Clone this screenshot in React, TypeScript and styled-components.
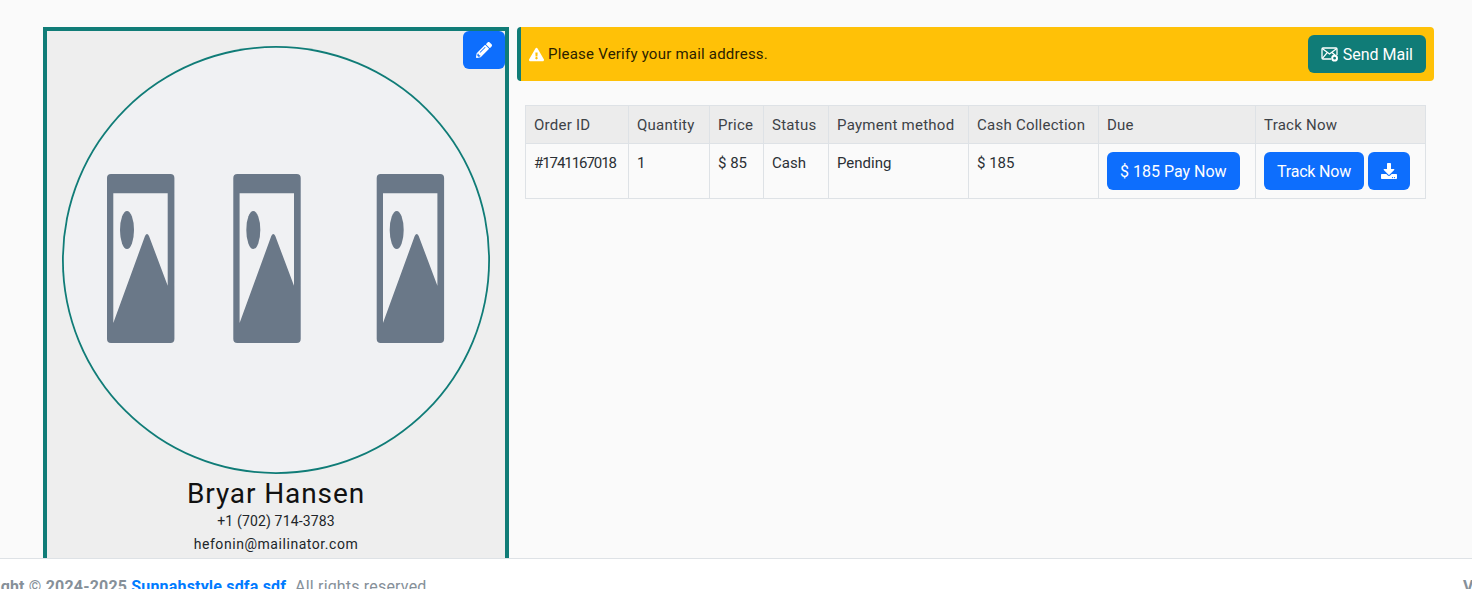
import styled, { createGlobalStyle } from 'styled-components';
import { FaDownload, FaExclamationTriangle, FaPencilAlt } from 'react-icons/fa';

const GlobalStyle = createGlobalStyle`
  html, body {
    margin: 0;
    height: 100%;
    overflow: hidden;
  }
  body {
    background: #fafafa;
    font-family: Roboto, "Liberation Sans", sans-serif;
    font-size: 15px;
    color: #212529;
  }
`;

const Page = styled.div`
  height: 589px;
  display: flex;
  flex-direction: column;
  overflow: hidden;
`;
const Content = styled.main`
  flex: 1;
  min-height: 0;
  overflow: hidden;
  display: grid;
  grid-template-columns: 466px 917px;
  column-gap: 8px;
  align-items: start;
  padding: 27px 0 0 43px;
`;
const ProfileCard = styled.section`
  position: relative;
  min-height: 600px;
  box-sizing: border-box;
  border: 4px solid #107c77;
  background: #eeeeee;
  padding: 15px 15px 0;
  text-align: center;
`;
const EditButton = styled.button`
  position: absolute;
  top: 0;
  right: 0;
  width: 42px;
  height: 38px;
  border: 0;
  border-radius: 6px;
  background: #0d6efd;
  color: #fff;
  display: flex;
  align-items: center;
  justify-content: center;
  font-size: 16px;
  padding: 0;
`;
const Avatar = styled.div`
  width: 428px;
  height: 428px;
  border-radius: 50%;
  background: #f0f1f3;
  box-shadow: inset 0 0 0 1.8px #107c77;
`;
const AvatarArt = styled.svg`
  display: block;
  width: 100%;
  height: 100%;
`;
const Name = styled.h2`
  margin: 3px 0 0;
  font-size: 28px;
  line-height: 33px;
  font-weight: 400;
  letter-spacing: 0.9px;
  color: #111;
`;
const ContactLine = styled.p<{ $spacing: number }>`
  margin: 0;
  font-size: 14px;
  line-height: 23px;
  color: #212529;
  letter-spacing: ${p => p.$spacing}px;
`;
const RightColumn = styled.div`
  display: flex;
  flex-direction: column;
  gap: 24px;
`;
const Alert = styled.div`
  height: 54px;
  box-sizing: border-box;
  background: #ffc107;
  border-left: 4px solid #107c77;
  border-radius: 4px;
  padding: 0 8px;
  display: flex;
  align-items: center;
  justify-content: space-between;
`;
const AlertText = styled.span`
  display: flex;
  align-items: center;
  gap: 4px;
  color: #2b2100;
  font-size: 15px;
  letter-spacing: 0.22px;
  svg {
    color: #fff;
    font-size: 15px;
  }
`;
const Button = styled.button<{ $tone?: 'blue' | 'teal' }>`
  height: 38px;
  padding: 0 13px;
  border: 0;
  border-radius: 6px;
  background: ${p => (p.$tone === 'teal' ? '#107c77' : '#0d6efd')};
  color: #fff;
  font-family: inherit;
  font-size: 16px;
  display: inline-flex;
  align-items: center;
  justify-content: center;
  gap: 4px;
  white-space: nowrap;
`;
const TrackButton = styled(Button)`
  letter-spacing: -0.2px;
`;
const TableWrap = styled.div`
  padding: 0 8px;
`;
const Table = styled.table`
  width: 900px;
  table-layout: fixed;
  border-collapse: collapse;
  font-size: 15px;
  th, td {
    border: 1px solid #dee2e6;
    padding: 9px 8px 7px;
    text-align: left;
    font-weight: 400;
    vertical-align: top;
    line-height: 21px;
    white-space: nowrap;
  }
  th {
    background: #ececec;
    color: #3d4247;
    letter-spacing: 0.25px;
  }
  td {
    color: #2b3035;
    padding-bottom: 8px;
  }
`;
const OrderId = styled.span`
  letter-spacing: -1.05px;
`;
const Actions = styled.div`
  display: flex;
  gap: 4px;
  margin-top: -1px;
`;
const Footer = styled.footer`
  flex: none;
  height: 31px;
  box-sizing: border-box;
  overflow: hidden;
  background: #fff;
  border-top: 1px solid #dee2e6;
  padding-top: 16px;
  font-size: 16px;
  line-height: 24px;
  color: #869099;
`;
const FooterRow = styled.div`
  display: flex;
  justify-content: space-between;
  margin: 0 -75px 0 -47px;
  white-space: nowrap;
  letter-spacing: 0.18px;
  a {
    color: #007bff;
    font-weight: 700;
    text-decoration: none;
  }
  b {
    font-weight: 700;
  }
`;

const columns = [103, 81, 54, 65, 140, 130, 157, 170];
const headers = ['Order ID', 'Quantity', 'Price', 'Status', 'Payment method', 'Cash Collection', 'Due', 'Track Now'];
const placeholders = [45, 171.3, 314.7];

function Placeholder({ x }: { x: number }) {
  // y values follow the avatar box, x is local to each stretched picture
  return (
    <g transform={`translate(${x} 0)`} fill="#6a7888" filter="url(#soft)">
      <path
        fillRule="evenodd"
        d="M4 128h59.4a4 4 0 0 1 4 4v161a4 4 0 0 1-4 4H4a4 4 0 0 1-4-4V132a4 4 0 0 1 4-4ZM6.3 147.3V277L38 190q2-4 4 0l18.7 49.7V147.3Z"
      />
      <ellipse cx="20" cy="184" rx="7" ry="19" />
    </g>
  );
}

function MailIcon() {
  return (
    <svg width="18" height="15" viewBox="0 0 18 15" fill="none" stroke="#fff" strokeWidth="1.3">
      <path d="M10 12H2a1 1 0 0 1-1-1V2a1 1 0 0 1 1-1h13a1 1 0 0 1 1 1v6" />
      <path d="M1.2 1.6 8.5 7l7.3-5.4M1.4 11.4 6.4 5.4M11 5.4l4 3.6" />
      <circle cx="13.6" cy="11.2" r="2.4" fill="#107c77" strokeWidth="2" />
    </svg>
  );
}

export default function App() {
  return (
    <Page>
      <GlobalStyle />
      <Content>
        <ProfileCard>
          <EditButton aria-label="Edit"><FaPencilAlt /></EditButton>
          <Avatar>
            <AvatarArt viewBox="0 0 428 428">
              <defs>
                <filter id="soft"><feGaussianBlur stdDeviation="0.4" /></filter>
              </defs>
              {placeholders.map(x => <Placeholder key={x} x={x} />)}
            </AvatarArt>
          </Avatar>
          <Name>Bryar Hansen</Name>
          <ContactLine $spacing={0.15}>+1 (702) 714-3783</ContactLine>
          <ContactLine $spacing={0.55}>hefonin@mailinator.com</ContactLine>
        </ProfileCard>
        <RightColumn>
          <Alert>
            <AlertText><FaExclamationTriangle /> Please Verify your mail address.</AlertText>
            <Button $tone="teal"><MailIcon /> Send Mail</Button>
          </Alert>
          <TableWrap>
            <Table>
              <colgroup>
                {columns.map((w, i) => <col key={i} style={{ width: w }} />)}
              </colgroup>
              <thead>
                <tr>{headers.map(h => <th key={h}>{h}</th>)}</tr>
              </thead>
              <tbody>
                <tr>
                  <td><OrderId>#1741167018</OrderId></td>
                  <td>1</td>
                  <td>$ 85</td>
                  <td>Cash</td>
                  <td>Pending</td>
                  <td>$ 185</td>
                  <td><Actions><Button>$ 185 Pay Now</Button></Actions></td>
                  <td>
                    <Actions>
                      <TrackButton>Track Now</TrackButton>
                      <Button aria-label="Download"><FaDownload /></Button>
                    </Actions>
                  </td>
                </tr>
              </tbody>
            </Table>
          </TableWrap>
        </RightColumn>
      </Content>
      <Footer>
        <FooterRow>
          <span><b>Copyright © 2024-2025 <a href="#">Sunnahstyle sdfa sdf.</a></b> All rights reserved.</span>
          <b>Version 1.0</b>
        </FooterRow>
      </Footer>
    </Page>
  );
}
